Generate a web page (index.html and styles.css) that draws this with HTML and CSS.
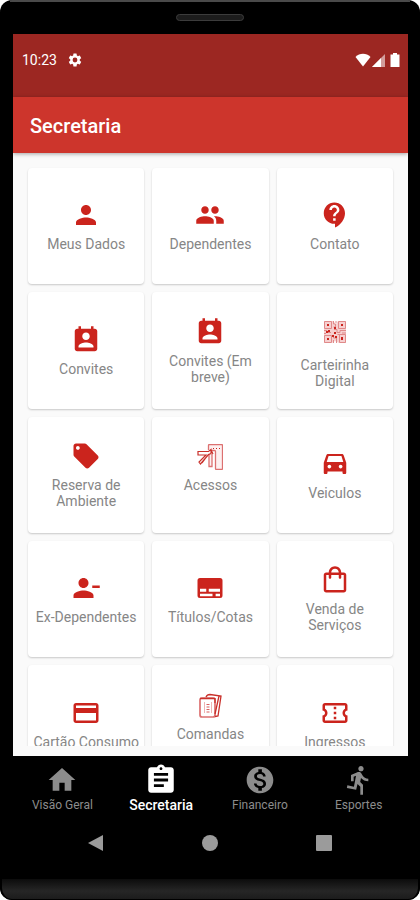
FILE: index.html
```html
<!DOCTYPE html>
<html lang="pt-BR">
<head>
<meta charset="utf-8">
<meta name="viewport" content="width=device-width, initial-scale=1">
<title>Secretaria</title>
<link rel="stylesheet" href="styles.css">
</head>
<body>
<div class="phone">
  <div class="phone-top"><span class="speaker"></span></div>
  <div class="screen">
    <div class="status">
      <span class="clock">10:23</span>
      <svg class="status-gear" viewBox="0 0 24 24"><path d="M19.14 12.94c.04-.3.06-.61.06-.94 0-.32-.02-.64-.07-.94l2.03-1.58a.49.49 0 0 0 .12-.61l-1.92-3.32a.49.49 0 0 0-.59-.22l-2.39.96a7 7 0 0 0-1.62-.94l-.36-2.54a.48.48 0 0 0-.48-.41h-3.84a.47.47 0 0 0-.47.41l-.36 2.54c-.59.24-1.13.57-1.62.94l-2.39-.96a.48.48 0 0 0-.59.22L2.74 8.87a.48.48 0 0 0 .12.61l2.03 1.58c-.05.3-.09.63-.09.94s.02.64.07.94l-2.03 1.58a.49.49 0 0 0-.12.61l1.92 3.32c.12.22.37.29.59.22l2.39-.96c.5.38 1.03.7 1.62.94l.36 2.54c.05.24.24.41.48.41h3.84c.24 0 .44-.17.47-.41l.36-2.54a7 7 0 0 0 1.62-.94l2.39.96c.22.08.47 0 .59-.22l1.92-3.32a.48.48 0 0 0-.12-.61zM12 15.6a3.6 3.6 0 1 1 0-7.2 3.6 3.6 0 0 1 0 7.2z"/></svg>
      <svg class="status-icons" viewBox="0 0 46 14"><path d="M8 13.500.5 4C4.500-.3 11.500-.3 15.500 4z"/><path d="M17 14 30 1v13z" opacity=".55"/><path d="M17 14l9-9v9z"/><path d="M38 1.500V0h4v1.500h2.500V14h-9V1.500z"/></svg>
    </div>
    <header class="appbar"><h1>Secretaria</h1></header>
    <main class="content">
      <div class="grid">
        <button class="card" type="button">
          <svg class="icon" viewBox="0 0 24 24"><path d="M12 12c2.210 0 4-1.790 4-4s-1.790-4-4-4-4 1.790-4 4 1.790 4 4 4zm0 2c-2.670 0-8 1.340-8 4v2h16v-2c0-2.660-5.330-4-8-4z"/></svg>
          <span class="label">Meus Dados</span>
        </button>
        <button class="card" type="button">
          <svg class="icon" viewBox="0 0 24 24"><path d="M16 11c1.660 0 2.990-1.340 2.990-3S17.660 5 16 5s-3 1.340-3 3 1.340 3 3 3zm-8 0c1.660 0 2.990-1.340 2.990-3S9.660 5 8 5 5 6.340 5 8s1.340 3 3 3zm0 2c-2.330 0-7 1.170-7 3.500V19h14v-2.500C15 14.170 10.330 13 8 13zm8 0c-.29 0-.62.020-.97.050 1.160.84 1.970 1.970 1.970 3.450V19h6v-2.500c0-2.330-4.670-3.500-7-3.500z"/></svg>
          <span class="label">Dependentes</span>
        </button>
        <button class="card" type="button">
          <svg class="icon" viewBox="0 0 24 24"><path d="M11.500 2C6.810 2 3 5.810 3 10.500S6.810 19 11.500 19h.5v3c4.860-2.340 8-7 8-11.500C20 5.810 16.190 2 11.500 2zm1 14.500h-2v-2h2v2zm0-3.500h-2c0-3.250 3-3 3-5 0-1.100-.9-2-2-2s-2 .9-2 2h-2c0-2.210 1.790-4 4-4s4 1.790 4 4c0 2.500-3 2.750-3 5z"/></svg>
          <span class="label">Contato</span>
        </button>

        <button class="card" type="button">
          <svg class="icon" viewBox="0 0 24 24"><path d="M19 3h-1V1h-2v2H8V1H6v2H5c-1.110 0-2 .9-2 2v14c0 1.100.89 2 2 2h14c1.100 0 2-.9 2-2V5c0-1.100-.9-2-2-2zm-7 3c1.660 0 3 1.340 3 3s-1.340 3-3 3-3-1.340-3-3 1.340-3 3-3zm6 12H6v-1c0-2 4-3.100 6-3.100s6 1.100 6 3.100v1z"/></svg>
          <span class="label">Convites</span>
        </button>
        <button class="card" type="button">
          <svg class="icon" viewBox="0 0 24 24"><path d="M19 3h-1V1h-2v2H8V1H6v2H5c-1.110 0-2 .9-2 2v14c0 1.100.89 2 2 2h14c1.100 0 2-.9 2-2V5c0-1.100-.9-2-2-2zm-7 3c1.660 0 3 1.340 3 3s-1.340 3-3 3-3-1.340-3-3 1.340-3 3-3zm6 12H6v-1c0-2 4-3.100 6-3.100s6 1.100 6 3.100v1z"/></svg>
          <span class="label">Convites (Em breve)</span>
        </button>
        <button class="card card-qr" type="button">
          <svg class="icon icon-fine" viewBox="0 0 26 26"><path fill="#f6d0d0" d="M2 2h9l3 3 2-3h8v22h-7l-4-2-3 2H2z"/><g fill="none" stroke="#e08a8a"><path d="M2.500 2.500h7v7h-7zM16.500 2.500h7v7h-7zM2.500 16.500h7v7h-7zM11.500 2v3h2v3h-2M14 2v2M2 11.500h3v2h4M12 10.500h3v3h3v-2h6M11.500 16v3h3v5M11.500 21v3M15.500 15.500h8v8h-6v-8M20 14h4M2 14.500h2"/></g><path d="M5 5h2v2H5zM19 5h2v2h-2zM5 19h2v2H5zM12 8h2v2h-2zM6 11h2v2H6zM4 12h2v2H4zM12 13h2v2h-2zM10 16h2v2h-2zM13 17h2v2h-2zM19 18h2v3h-2z"/></svg>
          <span class="label">Carteirinha Digital</span>
        </button>

        <button class="card" type="button">
          <svg class="icon" viewBox="0 0 24 24"><path d="M21.410 11.580l-9-9C12.050 2.220 11.550 2 11 2H4c-1.100 0-2 .9-2 2v7c0 .55.220 1.050.59 1.420l9 9c.36.360.86.580 1.410.580s1.050-.220 1.410-.590l7-7c.370-.360.590-.860.590-1.410s-.230-1.060-.590-1.420zM5.500 7C4.670 7 4 6.330 4 5.500S4.670 4 5.500 4 7 4.670 7 5.500 6.330 7 5.500 7z"/></svg>
          <span class="label">Reserva de Ambiente</span>
        </button>
        <button class="card card-high" type="button">
          <svg class="icon icon-fine" viewBox="0 0 26 26"><g fill="#fdf0f0" stroke="#dc7070" stroke-width="1.300"><path d="M11.500 6V1.500q0-1 1-1h12q1 0 1 1v23q0 1-1 1h-5q-1 0-1-1V7.500q0-1-1-1H14M12 10v12.500h3V10"/></g><g fill="none" stroke="#c9302a" stroke-width="1.200"><path d="M1 7.500h10.500l2.500-2v4l-2.500 1-8 9.500-1.500-2 7-7H1z M8 15l-3 4M14 6l2 4"/></g><path d="M16 4h1v1h-1zM19 4h1v1h-1zM22 4h1v1h-1z"/></svg>
          <span class="label">Acessos</span>
        </button>
        <button class="card" type="button">
          <svg class="icon" viewBox="0 0 24 24"><path d="M18.920 5.010C18.720 4.420 18.160 4 17.500 4h-11c-.66 0-1.210.42-1.420 1.010L3 11v8c0 .55.45 1 1 1h1c.55 0 1-.45 1-1v-1h12v1c0 .55.45 1 1 1h1c.55 0 1-.45 1-1v-8l-2.080-5.990zM6.850 5.500h10.290l1.500 4.800H5.350zM7.500 15.500c-.83 0-1.500-.67-1.500-1.500s.67-1.500 1.500-1.500S9 13.170 9 14s-.67 1.500-1.500 1.500zm9 0c-.83 0-1.500-.67-1.500-1.500s.67-1.500 1.500-1.500 1.500.67 1.500 1.500-.67 1.500-1.500 1.500z"/></svg>
          <span class="label">Veiculos</span>
        </button>

        <button class="card" type="button">
          <svg class="icon" viewBox="0 0 24 24"><path d="M14 8c0-2.210-1.790-4-4-4S6 5.790 6 8s1.790 4 4 4 4-1.790 4-4zM2 18v2h16v-2c0-2.660-5.330-4-8-4s-8 1.340-8 4zM17 10h6v2h-6z"/></svg>
          <span class="label">Ex-Dependentes</span>
        </button>
        <button class="card" type="button">
          <svg class="icon" viewBox="0 0 24 24"><path fill-rule="evenodd" d="M4 4h16a2 2 0 0 1 2 2v12a2 2 0 0 1-2 2H4a2 2 0 0 1-2-2V6a2 2 0 0 1 2-2zM4 12.500h5V15H4zM11 12.500h9V15h-9zM4 16.500h10V18.500H4zM16.500 16.500H20v2h-3.500z"/></svg>
          <span class="label">Títulos/Cotas</span>
        </button>
        <button class="card" type="button">
          <svg class="icon" viewBox="0 0 24 24"><path d="M19 6h-2c0-2.760-2.240-5-5-5S7 3.240 7 6H5c-1.100 0-2 .9-2 2v12c0 1.100.9 2 2 2h14c1.100 0 2-.9 2-2V8c0-1.100-.9-2-2-2zm-7-3c1.660 0 3 1.340 3 3H9c0-1.660 1.340-3 3-3zm7 17H5V8h2v2c0 .55.45 1 1 1s1-.45 1-1V8h6v2c0 .55.45 1 1 1s1-.45 1-1V8h2v12z"/></svg>
          <span class="label">Venda de Serviços</span>
        </button>

        <button class="card" type="button">
          <svg class="icon" viewBox="0 0 24 24"><path d="M20 4H4c-1.110 0-1.990.89-1.990 2L2 18c0 1.110.89 2 2 2h16c1.110 0 2-.89 2-2V6c0-1.110-.89-2-2-2zm0 14H4v-6h16v6zm0-10H4V6h16v2z"/></svg>
          <span class="label">Cartão Consumo</span>
        </button>
        <button class="card card-high" type="button">
          <svg class="icon icon-fine" viewBox="0 0 26 26"><g fill="none" stroke="#dc7070" stroke-width="1.700"><rect x="3" y="5" width="15" height="19" rx="2"/></g><path stroke="#efb4b4" d="M7.500 9v11M14.500 9v11"/><g fill="none" stroke="#c9302a"><path d="M3 5.500h15M9 4q1-2.500 4-2.500M13 1.500l11 1.500-3 20-3 .5M18 5v5M22 3l-4 18" stroke-width="1.300"/><path d="M9.500 11.500h3M9.500 14h3M9.500 16.500h3M9.500 19h3" stroke="#d96060"/></g></svg>
          <span class="label">Comandas</span>
        </button>
        <button class="card" type="button">
          <svg class="icon" viewBox="0 0 24 24"><path d="M22 10V6c0-1.110-.9-2-2-2H4c-1.100 0-1.990.89-1.990 2v4c1.100 0 1.990.9 1.990 2s-.89 2-2 2v4c0 1.100.9 2 2 2h16c1.100 0 2-.9 2-2v-4c-1.100 0-2-.9-2-2s.9-2 2-2zm-2-1.460c-1.190.69-2 1.990-2 3.460s.81 2.770 2 3.460V18H4v-2.540c1.190-.69 2-1.990 2-3.460 0-1.480-.8-2.770-1.990-3.460L4 6h16v2.540zM11 15h2v2h-2zm0-4h2v2h-2zm0-4h2v2h-2z"/></svg>
          <span class="label">Ingressos</span>
        </button>
      </div>
    </main>
    <nav class="tabs">
      <a class="tab" href="#geral">
        <svg viewBox="0 0 24 24"><path d="M10 20v-6h4v6h5v-8h3L12 3 2 12h3v8z"/></svg>
        <span>Visão Geral</span>
      </a>
      <a class="tab tab-active" href="#secretaria" aria-current="page">
        <svg viewBox="0 0 24 24"><path d="M19 3h-4.180C14.400 1.840 13.300 1 12 1c-1.300 0-2.400.84-2.820 2H5c-1.100 0-2 .9-2 2v14c0 1.100.9 2 2 2h14c1.100 0 2-.9 2-2V5c0-1.100-.9-2-2-2zm-7 0c.55 0 1 .45 1 1s-.45 1-1 1-1-.45-1-1 .45-1 1-1zm2 14H7v-2h7v2zm3-4H7v-2h10v2zm0-4H7V7h10v2z"/></svg>
        <span>Secretaria</span>
      </a>
      <a class="tab" href="#financeiro">
        <svg viewBox="0 0 24 24"><path d="M12 2C6.480 2 2 6.480 2 12s4.480 10 10 10 10-4.480 10-10S17.520 2 12 2zm1.410 16.090V20h-2.670v-1.930c-1.710-.36-3.160-1.460-3.270-3.400h1.960c.1 1.050.82 1.870 2.650 1.870 1.960 0 2.400-.98 2.400-1.590 0-.83-.44-1.610-2.670-2.140-2.480-.6-4.180-1.620-4.180-3.670 0-1.720 1.390-2.840 3.110-3.210V4h2.670v1.950c1.860.45 2.790 1.860 2.850 3.390H14.300c-.05-1.110-.64-1.870-2.220-1.870-1.500 0-2.400.68-2.400 1.640 0 .84.65 1.390 2.670 1.910s4.180 1.390 4.180 3.910c-.01 1.830-1.380 2.830-3.120 3.160z"/></svg>
        <span>Financeiro</span>
      </a>
      <a class="tab" href="#esportes">
        <svg viewBox="0 0 24 24"><path d="M13.490 5.480c1.100 0 2-.9 2-2s-.9-2-2-2-2 .9-2 2 .9 2 2 2zm-3.600 13.900l1-4.400 2.100 2v6h2v-7.500l-2.100-2 .6-3c1.300 1.500 3.300 2.500 5.500 2.500v-2c-1.900 0-3.500-1-4.300-2.400l-1-1.600c-.4-.6-1-1-1.700-1-.3 0-.5.1-.8.1l-5.200 2.200v4.700h2v-3.400l1.800-.7-1.600 8.100-4.900-1-.4 2 7 1.400z"/></svg>
        <span>Esportes</span>
      </a>
    </nav>
    <div class="system">
      <button type="button" aria-label="Voltar"><svg viewBox="0 0 18 18"><path d="M1 9 16 1v16z"/></svg></button>
      <button type="button" aria-label="Início"><svg viewBox="0 0 18 18"><circle cx="9" cy="9" r="8"/></svg></button>
      <button type="button" aria-label="Recentes"><svg viewBox="0 0 18 18"><rect x="1" y="1" width="16" height="16" rx="1"/></svg></button>
    </div>
  </div>
  <div class="phone-bottom"></div>
</div>
</body>
</html>
```
FILE: styles.css
```css
* { box-sizing: border-box; }

body {
  margin: 0;
  background: #fff;
  font-family: Roboto, "Liberation Sans", sans-serif;
}

button {
  margin: 0;
  padding: 0;
  border: 0;
  background: none;
  font: inherit;
  color: inherit;
}

svg { display: block; fill: currentColor; }

.phone {
  display: flex;
  flex-direction: column;
  height: 100vh;
  overflow: hidden;
  background: #000;
  border-radius: 12px;
}

.phone-top {
  flex: none;
  display: flex;
  justify-content: center;
  height: 34px;
  margin: 0 10px;
  padding-top: 12px;
  border-top: 2px solid #4a4a4a;
}

.speaker {
  width: 68px;
  height: 7px;
  border: 1px solid #3c3c3c;
  border-radius: 4px;
  background: #1c1c1c;
}

.screen {
  flex: 1;
  min-height: 0;
  display: flex;
  flex-direction: column;
  margin: 0 12px 0 13px;
}

.status {
  flex: none;
  display: flex;
  align-items: center;
  height: 63px;
  padding: 0 7px 12px 9px;
  background: #9c2722;
  color: #fff;
}

.clock { font-size: 14px; }
.status-gear { width: 16px; height: 16px; margin-left: 10px; }
.status-icons { width: 46px; height: 14px; margin-left: auto; }

.appbar {
  flex: none;
  position: relative;
  display: flex;
  align-items: center;
  height: 56px;
  padding: 2px 17px 0;
  background: #cd352c;
  color: #fff;
  box-shadow: 0 1px 4px rgba(0, 0, 0, .35);
}

.appbar h1 {
  margin: 0;
  font-size: 20px;
  font-weight: 500;
}

.content {
  flex: 1;
  min-height: 0;
  display: flex;
  flex-direction: column;
  padding-bottom: 10px;
  background: #fafafa;
}

.grid {
  flex: 1;
  min-height: 0;
  overflow: hidden;
  display: grid;
  grid-template-columns: repeat(3, 1fr);
  align-content: start;
  gap: 8px;
  padding: 15px 15px 0;
}

.card {
  display: flex;
  flex-direction: column;
  align-items: center;
  justify-content: center;
  gap: 6px;
  min-width: 0;
  aspect-ratio: 1;
  padding: 0 4px;
  border-radius: 4px;
  background: #fff;
  box-shadow: 0 1px 2px rgba(0, 0, 0, .2);
}

.icon { width: 30px; height: 30px; color: #cb241d; }
.icon-fine { width: 26px; height: 26px; }

.label {
  font-size: 14px;
  line-height: 16px;
  color: #868686;
}

.card-high { gap: 7px; padding-bottom: 12px; }
.card-qr { gap: 12px; padding: 6px 16px 0; }

.tabs {
  flex: none;
  display: flex;
  height: 64px;
  background: #000;
}

.tab {
  flex: 1;
  display: flex;
  flex-direction: column;
  align-items: center;
  padding-top: 8px;
  font-size: 12px;
  line-height: 18px;
  color: #8c8c8c;
  text-decoration: none;
}

.tab svg { width: 32px; height: 32px; }
.tab-active { font-size: 14px; font-weight: 500; color: #fff; }
.tab-active svg { width: 34px; height: 34px; margin: -1px 0; }

.system {
  flex: none;
  display: flex;
  justify-content: space-between;
  height: 59px;
  padding: 14px 75px 0 74px;
  color: #9b9b9b;
}

.system button { width: 18px; height: 18px; }

.phone-bottom {
  flex: none;
  height: 21px;
  border-radius: 0 0 12px 12px;
  background: linear-gradient(#0c0c0c, #262626 60%, #1c1c1c);
  border: solid #000;
  border-width: 0 2px 1px;
}
```
